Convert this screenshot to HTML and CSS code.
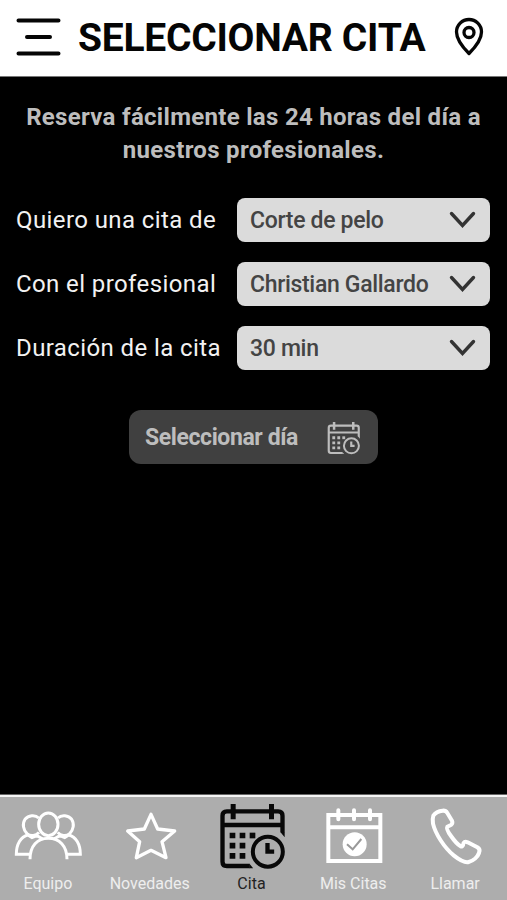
FILE: index.html
```html
<!DOCTYPE html>
<html lang="es">
<head>
<meta charset="utf-8">
<title>Seleccionar cita</title>
<link rel="stylesheet" href="styles.css">
</head>
<body>
<svg class="defs" aria-hidden="true">
  <symbol id="chevron" viewBox="0 0 27 18"><path d="M2.500 2.500 13.500 14.500 24.500 2.500"/></symbol>
  <symbol id="calendar" viewBox="46.500 45 216 216">
    <path d="M151 243H82Q69 243 69 230V92Q69 79 82 79H236Q249 79 249 92V142M69 120H249" stroke-width="13"/>
    <path class="solid" d="M242.500 141H255.500V157ZM150 236.500V249.500H161Z"/>
    <path d="M101 57V103M216 57V103" stroke-width="15"/>
    <circle cx="205" cy="200" r="45" stroke-width="12"/>
    <path d="M204 174V200H224" stroke-width="13"/>
    <path d="M99 143V221M129 143V221" stroke-width="17" stroke-dasharray="17 13.500"/>
    <path d="M159 143V160" stroke-width="17"/>
  </symbol>
</svg>
<header class="topbar">
  <svg class="menu" viewBox="0 0 46 38"><path d="M2.500 2.500H42.500M11 19H34M2.500 35.500H42.500"/></svg>
  <h1 class="title">SELECCIONAR CITA</h1>
  <svg class="pin" viewBox="0 0 32 40"><path d="M16 36.500C11 31.500 3.500 23 3.500 15A12.500 12.500 0 0 1 28.500 15C28.500 23 21 31.500 16 36.500Z" stroke-linejoin="round"/><circle cx="16" cy="15.500" r="5"/></svg>
</header>
<main class="content">
  <p class="intro">Reserva fácilmente las 24 horas del día a<br>nuestros profesionales.</p>
  <div class="form">
    <div class="row"><span class="label">Quiero una cita de</span><div class="select"><span>Corte de pelo</span><svg class="chevron"><use href="#chevron"/></svg></div></div>
    <div class="row"><span class="label">Con el profesional</span><div class="select"><span>Christian Gallardo</span><svg class="chevron"><use href="#chevron"/></svg></div></div>
    <div class="row"><span class="label">Duración de la cita</span><div class="select"><span>30 min</span><svg class="chevron"><use href="#chevron"/></svg></div></div>
  </div>
  <button class="day"><span>Seleccionar día</span><svg class="day-icon"><use href="#calendar"/></svg></button>
</main>
<nav class="tabs">
  <a class="tab"><svg class="icon" viewBox="36 45 216 216" stroke-width="9">
    <ellipse cx="145" cy="118" rx="29" ry="34"/>
    <path d="M116 99C105 88 85 91 75 103C66 116 70 135 81 146C92 155 108 153 117 142M174 99C185 88 205 91 215 103C224 116 220 135 209 146C198 155 182 153 173 142"/>
    <path d="M90 223C90 183 112 160 145 160S201 183 201 223M88 208H49C49 178 62 155 84 150L96 158L111 152L128 162M202 208H241C241 178 228 155 206 150L194 158L179 152L162 162"/>
  </svg><span>Equipo</span></a>
  <a class="tab"><svg class="icon" viewBox="341 45 216 216" stroke-width="10" stroke-linejoin="round"><path d="M452 88 472 132 523 138 485 170 497 218 452 196 408 218 418 170 382 138 432 132Z"/></svg><span>Novedades</span></a>
  <a class="tab active"><svg class="icon"><use href="#calendar"/></svg><span>Cita</span></a>
  <a class="tab"><svg class="icon" viewBox="37 45 216 216">
    <path d="M71 90H227V228H71ZM71 127H227" stroke-width="12"/>
    <path d="M101 76V103M148 76V103M196 76V103" stroke-width="12" stroke-linecap="round"/>
    <circle class="disc" cx="150" cy="178" r="36"/><path class="check" d="M127 178 144 193 170 162"/>
  </svg><span>Mis Citas</span></a>
  <a class="tab"><svg class="icon" viewBox="342 45 216 216" stroke-width="12" stroke-linejoin="round"><path d="M385 92C391 83 402 78 413 77Q422 76 427 84L441 107Q444 114 439 119L427 125C423 132 430 142 438 153C447 166 457 178 467 184Q472 186 474 181C475 170 480 169 488 172L517 187Q527 193 522 204C518 216 505 228 491 231C479 234 461 223 446 211C417 187 391 146 384 116Q382 100 385 92Z"/></svg><span>Llamar</span></a>
</nav>
</body>
</html>
```
FILE: styles.css
```css
* { box-sizing: border-box; }
body {
  margin: 0;
  height: 900px;
  display: flex;
  flex-direction: column;
  overflow: hidden;
  background: #000;
  font-family: Roboto, sans-serif;
}
svg { display: block; fill: none; stroke: currentColor; flex: none; }
.defs { display: none; }
.solid { fill: currentColor; stroke: none; }
.topbar {
  height: 77px;
  display: flex;
  align-items: center;
  padding: 0 20px 3px 16px;
  background: #fff;
  border-bottom: 1px solid #777;
  color: #050505;
}
.menu { width: 46px; height: 38px; stroke-width: 4; stroke-linecap: round; }
.title {
  margin: 2px 0 0 16px;
  font-size: 39px;
  line-height: 46px;
  font-weight: 700;
  letter-spacing: -0.27px;
  white-space: nowrap;
  width: 360px;
}
.pin { width: 32px; height: 40px; margin-left: 15px; stroke-width: 3.3; }
.content { flex: 1; display: flex; flex-direction: column; align-items: center; }
.intro {
  margin: 24px 0 0;
  width: 507px;
  text-align: center;
  white-space: nowrap;
  color: #bdbdbd;
  font-size: 24px;
  line-height: 33px;
  letter-spacing: 0.3px;
  font-weight: 700;
}
.form { width: 507px; margin-top: 31px; display: flex; flex-direction: column; gap: 20px; padding: 0 17px 0 16px; }
.row { height: 44px; display: flex; align-items: center; justify-content: space-between; }
.label { color: #f2f2f2; font-size: 24px; line-height: 30px; letter-spacing: 0.4px; white-space: nowrap; }
.select {
  width: 253px;
  height: 44px;
  display: flex;
  align-items: center;
  justify-content: space-between;
  padding: 0 14px 0 13px;
  border-radius: 8px;
  background: #dbdbdb;
  color: #444;
  font-size: 23px;
  font-weight: 500;
  letter-spacing: -0.32px;
  white-space: nowrap;
}
.chevron { width: 27px; height: 18px; stroke-width: 3.4; stroke-linecap: round; color: #333; }
.day {
  width: 249px;
  height: 54px;
  margin-top: 40px;
  padding: 2px 17px 0 16px;
  display: flex;
  align-items: center;
  justify-content: space-between;
  border: 0;
  border-radius: 12px;
  background: #404040;
  color: #bdbdbd;
  font: 700 23px/28px Roboto, sans-serif;
  letter-spacing: -0.4px;
}
.day-icon { width: 36px; height: 36px; }
.tabs {
  height: 106px;
  display: flex;
  margin-left: -3px;
  width: 510px;
  border-top: 1px solid #666;
  box-shadow: inset 0 2px #f5f5f5;
  background: #adadad;
  padding: 5px 1px 0 0;
}
.tab { flex: 1; display: flex; flex-direction: column; align-items: center; color: #fff; font-size: 16px; line-height: 20px; }
.tab span { margin-top: 2px; color: #eee; white-space: nowrap; }
.active { color: #080808; }
.active span { color: #222; }
.icon { width: 72px; height: 72px; }
.disc { fill: #fff; stroke: none; }
.check { stroke: #999; stroke-width: 6; }
```
